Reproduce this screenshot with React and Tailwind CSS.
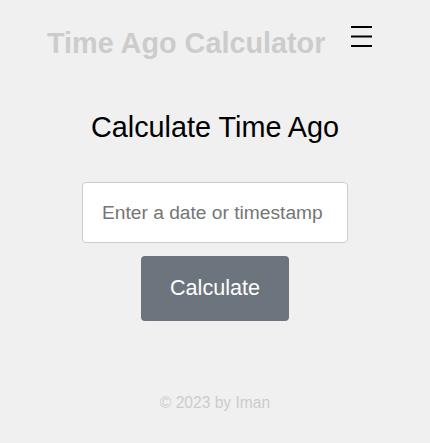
import React from "react";

export default function App() {
  return (
    <div className="min-h-screen w-full bg-[#f0f0f0] font-['Liberation_Sans',Arial,sans-serif] flex flex-col">
      <header className="flex items-start pt-[24px] pl-[47px]">
        <h1 className="mt-[5px] text-[28.8px] leading-none font-bold text-[#cccccc] whitespace-nowrap">
          Time Ago Calculator
        </h1>
        <button className="ml-[25px] w-[23px] h-[26px] p-0" aria-label="Menu">
          <svg width="23" height="26" viewBox="0 0 23 26">
            <rect x="1" y="2" width="21" height="2" fill="#000" />
            <rect x="1" y="11.5" width="21" height="2" fill="#000" />
            <rect x="1" y="21" width="21" height="2" fill="#000" />
          </svg>
        </button>
      </header>
      <main className="flex flex-col items-center">
        <h2 className="mt-[55.5px] text-[28.8px] leading-none text-black whitespace-nowrap">
          Calculate Time Ago
        </h2>
        <input
          type="text"
          placeholder="Enter a date or timestamp"
          className="mt-[40px] w-[266px] h-[61px] px-[19px] bg-white border border-[#cccccc] rounded-[4px] text-[19.2px] text-black placeholder:text-[#757575] outline-none"
        />
        <button className="mt-[13px] h-[65px] px-[29px] pb-[2px] bg-[#6c757d] text-white text-[21.6px] rounded-[4px] leading-none">
          Calculate
        </button>
      </main>
      <footer className="mt-[74px] text-center text-[15.6px] leading-none text-[#cccccc]">
        © 2023 by Iman
      </footer>
    </div>
  );
}
